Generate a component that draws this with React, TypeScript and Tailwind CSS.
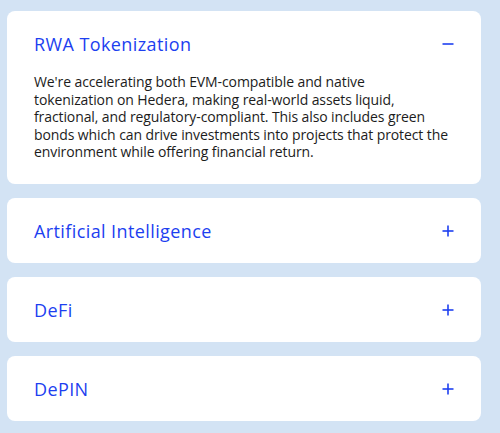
import React, { useState } from "react";

type Item = { title: string; lines: string[] };

const items: Item[] = [
  {
    title: "RWA Tokenization",
    lines: [
      "We're accelerating both EVM-compatible and native",
      "tokenization on Hedera, making real-world assets liquid,",
      "fractional, and regulatory-compliant. This also includes green",
      "bonds which can drive investments into projects that protect the",
      "environment while offering financial return.",
    ],
  },
  { title: "Artificial Intelligence", lines: [] },
  { title: "DeFi", lines: [] },
  { title: "DePIN", lines: [] },
];

function Sign({ open }: { open: boolean }) {
  return (
    <svg width="12" height="12" viewBox="0 0 12 12" className="shrink-0 text-[#1d3ff0]">
      <path d="M0.5 6H11.5" stroke="currentColor" strokeWidth="1.6" />
      {!open && <path d="M6 0.5V11.5" stroke="currentColor" strokeWidth="1.6" />}
    </svg>
  );
}

export default function App() {
  const [open, setOpen] = useState(0);
  return (
    <div
      className="min-h-[433px] w-[500px] bg-[#d3e3f4] pl-[7px] pr-[19px] pt-[11px] pb-[13px]"
      style={{ fontFamily: "'Open Sans', 'Noto Sans', sans-serif" }}
    >
      <div className="flex flex-col gap-[14px]">
        {items.map((it, i) => {
          const isOpen = open === i;
          return (
            <div key={it.title} className="rounded-[8px] bg-white px-[27px] pt-[22px] pb-[21px]">
              <button
                type="button"
                onClick={() => setOpen(isOpen ? -1 : i)}
                className="flex w-full items-center justify-between text-left"
              >
                <span className="text-[18px] leading-[22px] tracking-[0.4px] text-[#1d3ff0]">{it.title}</span>
                <Sign open={isOpen} />
              </button>
              {isOpen && it.lines.length > 0 && (
                <p className="mt-[18px] mb-[2px] whitespace-nowrap text-[14px] leading-[17.5px] tracking-[-0.1px] text-[#1c1c1c]">
                  {it.lines.map((line) => (
                    <span key={line} className="block">
                      {line}
                    </span>
                  ))}
                </p>
              )}
            </div>
          );
        })}
      </div>
    </div>
  );
}
